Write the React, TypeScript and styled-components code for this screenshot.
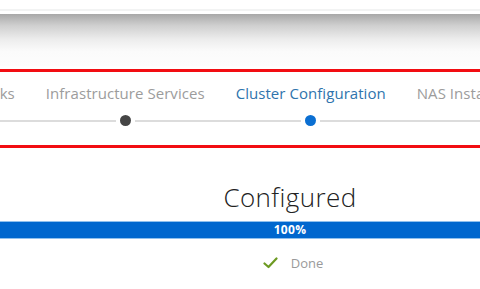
import React from "react";
import styled, { createGlobalStyle } from "styled-components";

const GlobalStyle = createGlobalStyle`
  html, body {
    margin: 0;
    padding: 0;
    background: #ffffff;
    overflow: hidden;
  }
  body {
    width: 480px;
    height: 289px;
    font-family: "Open Sans", "Liberation Sans", sans-serif;
  }
`;

const Page = styled.div`
  width: 480px;
  height: 289px;
  overflow: hidden;
  display: flex;
  flex-direction: column;
`;

const TopStrip = styled.div`
  height: 9px;
  border-bottom: 2px solid #f2f3f3;
  margin-bottom: 3px;
`;

const Banner = styled.div`
  height: 52px;
  background: linear-gradient(
    to bottom,
    #a8a8a8 0%,
    #cfcfcf 22%,
    #ececec 48%,
    #fbfbfb 72%,
    #fdfdfd 100%
  );
`;

const Highlight = styled.div`
  margin-top: 3px;
  height: 73px;
  border-top: 3px solid #f20d12;
  border-bottom: 3px solid #f20d12;
  overflow: hidden;
`;

const Stepper = styled.div`
  display: flex;
  margin-left: -68px;
  padding-top: 12px;
`;

const Step = styled.div`
  flex: 0 0 auto;
  display: flex;
  flex-direction: column;
  align-items: center;
`;

const StepLabel = styled.div<{ $active?: boolean; $tail?: number }>`
  padding: 0 ${(p) => 15.5 + (p.$tail ?? 0)}px 0 15.5px;
  font-size: 15px;
  line-height: 18px;
  letter-spacing: 0.05px;
  white-space: nowrap;
  color: ${(p) => (p.$active ? "#2f74ad" : "#9c9c9c")};
`;

const Track = styled.div`
  align-self: stretch;
  margin-top: 13px;
  display: flex;
  align-items: center;
  gap: 4px;
`;

const Line = styled.div`
  flex: 1;
  height: 2px;
  background: #dcdcdc;
`;

const Dot = styled.div<{ $active?: boolean }>`
  width: 11px;
  height: 11px;
  border-radius: 50%;
  background: ${(p) => (p.$active ? "#0b6fd2" : "#454545")};
`;

const Main = styled.div`
  width: 580px;
  display: flex;
  flex-direction: column;
  align-items: center;
`;

const Title = styled.h1`
  margin: 33px 0 0;
  font-family: "Open Sans", "Lato", sans-serif;
  font-weight: 300;
  font-size: 26px;
  line-height: 32px;
  color: #222222;
  letter-spacing: 0.4px;
`;

const ProgressBar = styled.div`
  margin-top: 9px;
  align-self: stretch;
  height: 16px;
  background: #0067ce;
  box-shadow: 0 -1px 0 #8fc1ee, 0 1px 0 #8fc1ee;
  display: flex;
  align-items: center;
  justify-content: center;
`;

const Percent = styled.span`
  color: #ffffff;
  font-size: 12px;
  font-weight: 700;
  line-height: 16px;
  letter-spacing: 0.3px;
`;

const Status = styled.div`
  margin-top: 16px;
  display: flex;
  align-items: center;
  gap: 13px;
  margin-left: 6px;
`;

const StatusText = styled.span`
  font-size: 13px;
  color: #9a9a9a;
`;

const steps = [
  { label: "Networks" },
  { label: "Infrastructure Services" },
  { label: "Cluster Configuration", active: true },
  { label: "NAS Installation", tail: 40 },
];

export default function App() {
  return (
    <Page>
      <GlobalStyle />
      <TopStrip />
      <Banner />
      <Highlight>
        <Stepper>
          {steps.map((s) => (
            <Step key={s.label}>
              <StepLabel $active={s.active} $tail={s.tail}>
                {s.label}
              </StepLabel>
              <Track>
                <Line />
                <Dot $active={s.active} />
                <Line />
              </Track>
            </Step>
          ))}
        </Stepper>
      </Highlight>
      <Main>
        <Title>Configured</Title>
        <ProgressBar>
          <Percent>100%</Percent>
        </ProgressBar>
        <Status>
          <svg width="15" height="12" viewBox="0 0 15 12">
            <path
              d="M1.5 6.5 L5.5 10 L13.5 1.5"
              fill="none"
              stroke="#6d9a22"
              strokeWidth="2.2"
              strokeLinecap="round"
              strokeLinejoin="round"
            />
          </svg>
          <StatusText>Done</StatusText>
        </Status>
      </Main>
    </Page>
  );
}
